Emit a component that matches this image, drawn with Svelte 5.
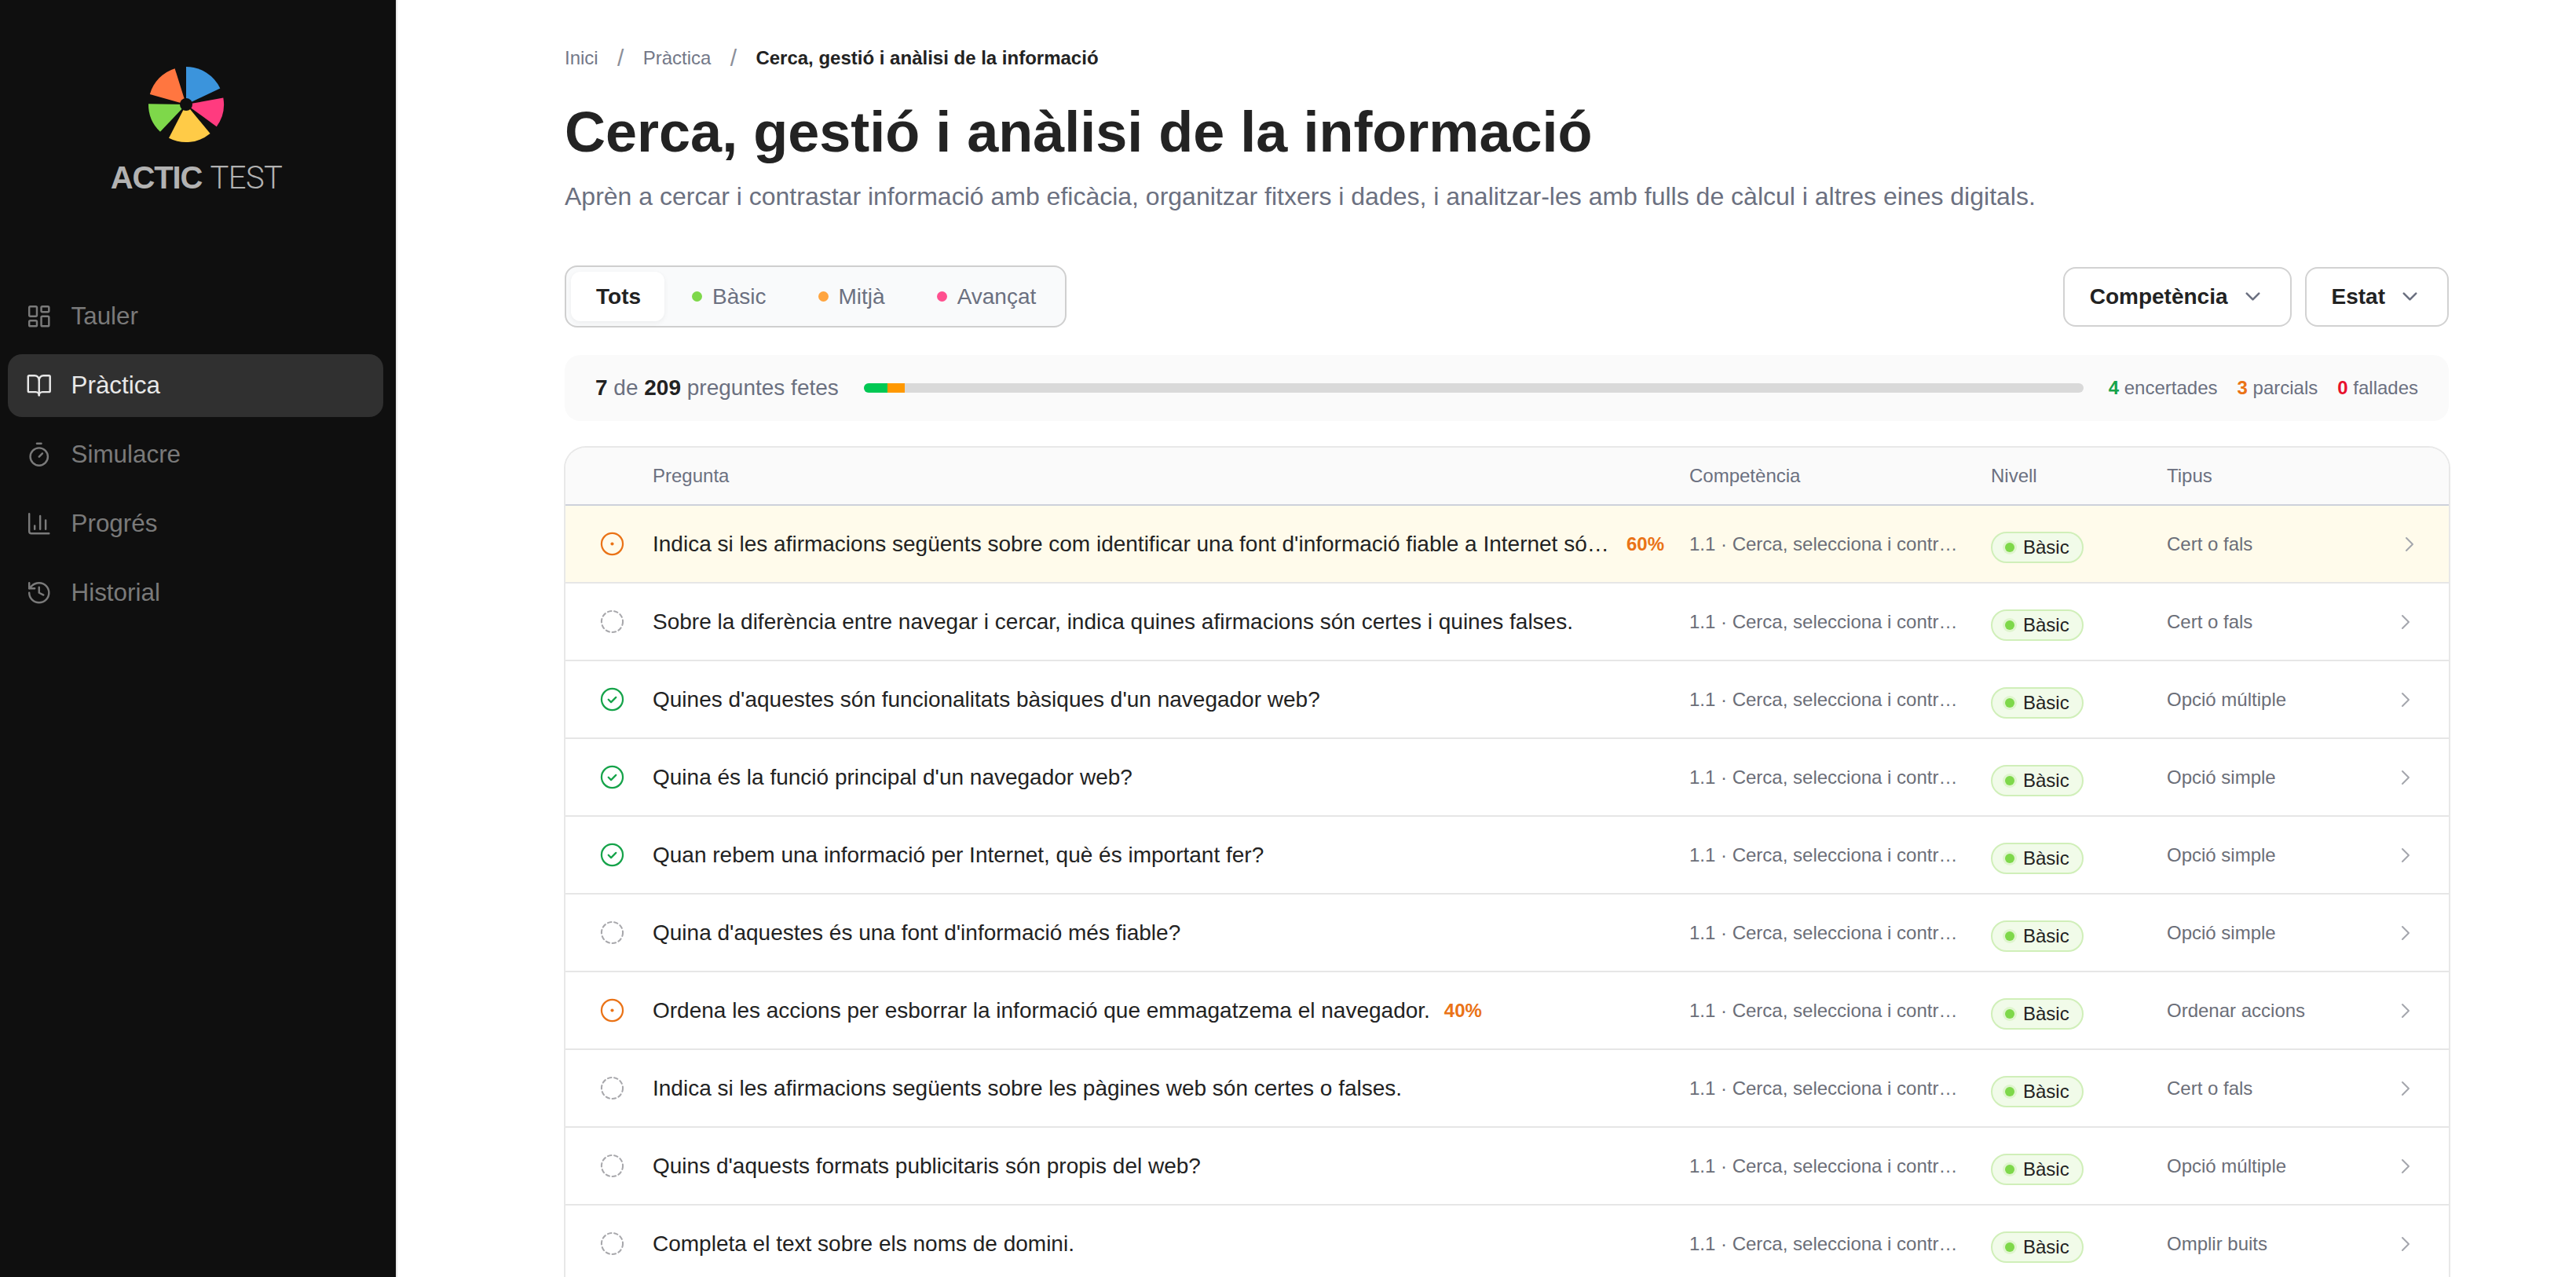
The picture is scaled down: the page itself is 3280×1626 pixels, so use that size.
<script>
  const nav = [
    { label: 'Tauler', icon: 'dash' },
    { label: 'Pràctica', icon: 'book', active: true },
    { label: 'Simulacre', icon: 'timer' },
    { label: 'Progrés', icon: 'chart' },
    { label: 'Historial', icon: 'history' }
  ];
  const comp = '1.1 · Cerca, selecciona i contrasta informació en entorns digitals';
  const rows = [
    { s: 'part', q: "Indica si les afirmacions següents sobre com identificar una font d'informació fiable a Internet són certes o falses.", p: '60%', t: 'Cert o fals', hi: true },
    { s: 'none', q: 'Sobre la diferència entre navegar i cercar, indica quines afirmacions són certes i quines falses.', t: 'Cert o fals' },
    { s: 'ok', q: "Quines d'aquestes són funcionalitats bàsiques d'un navegador web?", t: 'Opció múltiple' },
    { s: 'ok', q: "Quina és la funció principal d'un navegador web?", t: 'Opció simple' },
    { s: 'ok', q: 'Quan rebem una informació per Internet, què és important fer?', t: 'Opció simple' },
    { s: 'none', q: "Quina d'aquestes és una font d'informació més fiable?", t: 'Opció simple' },
    { s: 'part', q: 'Ordena les accions per esborrar la informació que emmagatzema el navegador.', p: '40%', t: 'Ordenar accions' },
    { s: 'none', q: 'Indica si les afirmacions següents sobre les pàgines web són certes o falses.', t: 'Cert o fals' },
    { s: 'none', q: "Quins d'aquests formats publicitaris són propis del web?", t: 'Opció múltiple' },
    { s: 'none', q: 'Completa el text sobre els noms de domini.', t: 'Omplir buits' }
  ];
</script>

<div class="page">
  <aside class="side">
    <div class="brand">
      <svg class="mark" viewBox="0 0 100 100" width="100" height="100">
        <path fill="#3b94dc" d="M50 50 L50 2 A48 48 0 0 1 93.3 29.4 Z" />
        <path fill="#ff3b7f" d="M50 50 L97.3 41.6 A48 48 0 0 1 88.8 78.2 Z" />
        <path fill="#ffcb47" d="M50 50 L80.6 87 A48 48 0 0 1 28 92.7 Z" />
        <path fill="#7ed84a" d="M50 50 L17 84.8 A48 48 0 0 1 2 49.2 Z" />
        <path fill="#ff7640" d="M50 50 L3.8 37.1 A48 48 0 0 1 35.6 4.2 Z" />
        <circle cx="50" cy="50" r="8" fill="#0f0f0f" />
      </svg>
      <div class="wordmark"><b>ACTIC</b> <span>TEST</span></div>
    </div>
    <nav class="nav">
      {#each nav as n}
        <div class="item" class:active={n.active}>
          <svg class="ico" viewBox="0 0 24 24" fill="none" stroke="currentColor" stroke-width="1.75" stroke-linecap="round" stroke-linejoin="round">
            {#if n.icon === 'dash'}
              <rect x="3" y="3" width="7" height="9" rx="1" /><rect x="14" y="3" width="7" height="5" rx="1" /><rect x="14" y="12" width="7" height="9" rx="1" /><rect x="3" y="16" width="7" height="5" rx="1" />
            {:else if n.icon === 'book'}
              <path d="M12 7v14" /><path d="M3 18a1 1 0 0 1-1-1V4a1 1 0 0 1 1-1h5a4 4 0 0 1 4 4 4 4 0 0 1 4-4h5a1 1 0 0 1 1 1v13a1 1 0 0 1-1 1h-6a3 3 0 0 0-3 3 3 3 0 0 0-3-3z" />
            {:else if n.icon === 'timer'}
              <line x1="10" x2="14" y1="2" y2="2" /><line x1="12" x2="15" y1="14" y2="11" /><circle cx="12" cy="14" r="8" />
            {:else if n.icon === 'chart'}
              <path d="M3 3v16a2 2 0 0 0 2 2h16" /><path d="M18 17V9" /><path d="M13 17V5" /><path d="M8 17v-3" />
            {:else}
              <path d="M3 12a9 9 0 1 0 9-9 9.75 9.75 0 0 0-6.74 2.74L3 8" /><path d="M3 3v5h5" /><path d="M12 7v5l4 2" />
            {/if}
          </svg>
          <span>{n.label}</span>
        </div>
      {/each}
    </nav>
  </aside>

  <main class="main">
    <div class="crumbs">
      <span>Inici</span><i>/</i><span>Pràctica</span><i>/</i><b>Cerca, gestió i anàlisi de la informació</b>
    </div>
    <h1>Cerca, gestió i anàlisi de la informació</h1>
    <p class="lead">Aprèn a cercar i contrastar informació amb eficàcia, organitzar fitxers i dades, i analitzar-les amb fulls de càlcul i altres eines digitals.</p>

    <div class="filters">
      <div class="tabs">
        <div class="tab on">Tots</div>
        <div class="tab"><em class="d g"></em>Bàsic</div>
        <div class="tab"><em class="d o"></em>Mitjà</div>
        <div class="tab"><em class="d p"></em>Avançat</div>
      </div>
      <div class="drops">
        <div class="drop">Competència
          <svg viewBox="0 0 24 24" fill="none" stroke="#6b7080" stroke-width="2" stroke-linecap="round" stroke-linejoin="round"><path d="m6 9 6 6 6-6" /></svg>
        </div>
        <div class="drop">Estat
          <svg viewBox="0 0 24 24" fill="none" stroke="#6b7080" stroke-width="2" stroke-linecap="round" stroke-linejoin="round"><path d="m6 9 6 6 6-6" /></svg>
        </div>
      </div>
    </div>

    <div class="strip">
      <div class="count"><b>7</b> de <b>209</b> preguntes fetes</div>
      <div class="bar"><div class="fill-g"></div><div class="fill-o"></div></div>
      <div class="stats">
        <span><b class="cg">4</b> encertades</span>
        <span><b class="co">3</b> parcials</span>
        <span><b class="cr">0</b> fallades</span>
      </div>
    </div>

    <div class="table">
      <div class="head">
        <div></div><div>Pregunta</div><div>Competència</div><div>Nivell</div><div>Tipus</div><div></div>
      </div>
      {#each rows as r}
        <div class="row" class:hi={r.hi}>
          <div class="st">
            {#if r.s === 'part'}
              <svg viewBox="0 0 24 24" fill="none" stroke="#ea7317" stroke-width="1.75"><circle cx="12" cy="12" r="10.5" /><circle cx="12" cy="12" r="1.6" fill="#ea7317" stroke="none" /></svg>
            {:else if r.s === 'ok'}
              <svg viewBox="0 0 24 24" fill="none" stroke="#16a34a" stroke-width="1.75" stroke-linecap="round" stroke-linejoin="round"><circle cx="12" cy="12" r="10.5" /><path d="m8.3 12.2 2.6 2.6 4.8-4.8" /></svg>
            {:else}
              <svg viewBox="0 0 24 24" fill="none" stroke="#a8a8ac" stroke-width="1.6" stroke-linecap="round" stroke-dasharray="3.5 2.9"><circle cx="12" cy="12" r="10.5" /></svg>
            {/if}
          </div>
          <div class="q"><span class="qt">{r.q}</span>{#if r.p}<span class="pct">{r.p}</span>{/if}</div>
          <div class="comp"><span>{comp}</span></div>
          <div class="lvl"><span class="badge"><em></em>Bàsic</span></div>
          <div class="type">{r.t}</div>
          <div class="chev"><svg viewBox="0 0 12 20" fill="none" stroke="#a4a6ad" stroke-width="2" stroke-linecap="round" stroke-linejoin="round"><path d="m2 2 8 8-8 8" /></svg></div>
        </div>
      {/each}
    </div>
  </main>
</div>

<style>
  :global(body) { margin: 0; background: #fff; }
  .page { display: flex; width: 3280px; height: 1626px; overflow: hidden; font-family: "Liberation Sans", Arial, sans-serif; color: #222; }

  .side { box-sizing: border-box; width: 506px; flex: none; background: #0f0f0f; border-right: 2px solid #e8e8e8; }
  .brand { display: flex; flex-direction: column; align-items: center; padding-top: 83px; padding-right: 4px; }
  .mark { display: block; margin-right: 26px; }
  .wordmark { margin-top: 20px; font-size: 40px; line-height: 46px; color: #b2b2b2; letter-spacing: -1.1px; white-space: nowrap; }
  .wordmark b { font-weight: 700; }
  .wordmark span { font-family: Roboto, sans-serif; font-weight: 300; letter-spacing: -0.6px; }

  .nav { margin-top: 113px; padding: 0 16px 0 10px; display: flex; flex-direction: column; gap: 8px; }
  .item { display: flex; align-items: center; gap: 24px; height: 80px; padding-left: 23px; border-radius: 18px; color: #7a7a7a; font-size: 31.4px; }
  .item.active { background: #303030; color: #e8e8e8; }
  .ico { width: 33.5px; height: 33.5px; flex: none; }

  .main { flex: 1; min-width: 0; box-sizing: border-box; padding: 58px 160px 0 212px; }
  .crumbs { display: flex; align-items: center; height: 32px; padding-left: 1px; font-size: 24px; color: #737888; }
  .crumbs i { font-style: normal; font-size: 30px; font-weight: 400; width: 57px; text-align: center; color: #8c8f99; }
  .crumbs b { color: #222; }
  h1 { margin: 34px 0 0; padding-left: 1px; font-size: 72px; line-height: 88px; font-weight: 700; color: #232323; }
  .lead { margin: 16px 0 0; padding-left: 1px; font-size: 32px; line-height: 44px; color: #6b7080; }

  .filters { display: flex; justify-content: space-between; align-items: center; margin: 66px 2px 0 1px; }
  .tabs { display: flex; gap: 4px; padding: 6px; box-sizing: border-box; height: 79px; background: #f9fafb; border: 2px solid #cfcfcf; border-radius: 16px; }
  .tab { display: flex; align-items: center; gap: 13px; padding: 0 31px; border-radius: 12px; font-size: 28px; color: #6b7080; }
  .tab.on { padding: 0 30px 0 32px; background: #fff; color: #222; font-weight: 700; box-shadow: 0 2px 6px rgba(0, 0, 0, 0.06); }
  .d { display: block; width: 13px; height: 13px; border-radius: 50%; }
  .g { background: #7ed84a; }
  .o { background: #ffa53f; }
  .p { background: #ff4f8f; }
  .drops { display: flex; gap: 17px; }
  .drop { display: flex; align-items: center; gap: 16px; box-sizing: border-box; height: 76px; padding: 0 32px; background: #fff; border: 2px solid #d2d2d2; border-radius: 16px; font-size: 28px; font-weight: 700; }
  .drop svg { width: 31px; height: 31px; }

  .strip { display: flex; align-items: center; box-sizing: border-box; height: 84px; margin: 35px 2px 0 1px; padding: 0 39px; background: #fafafa; border-radius: 20px; }
  .count { font-size: 28px; color: #6b7080; white-space: nowrap; }
  .count b, .stats b { font-weight: 700; }
  .count b { color: #222; }
  .bar { flex: 1; display: flex; height: 12px; margin: 0 32px; background: #d9d9d9; border-radius: 6px; overflow: hidden; }
  .fill-g { width: 30px; background: #00c853; }
  .fill-o { width: 22px; background: #ff9800; }
  .stats { display: flex; gap: 25px; font-size: 24px; color: #6b7080; white-space: nowrap; }
  .cg { color: #16a34a; }
  .co { color: #ea7317; }
  .cr { color: #e8112d; }

  .table { margin-top: 32px; border: 2px solid #e8e8e8; border-bottom: 0; border-radius: 28px 28px 0 0; overflow: hidden; }
  .head, .row { display: grid; grid-template-columns: 111px 1320px 384px 224px 281px 1fr; align-items: center; }
  .head { height: 72px; background: #fafafa; border-bottom: 2px solid #cdd1da; font-size: 24px; color: #6b7080; }
  .row { height: 97px; border-bottom: 2px solid #e6e6e6; background: #fff; }
  .row.hi { background: #fffbeb; }
  .st { display: flex; justify-content: center; padding-left: 8px; }
  .st svg { width: 31px; height: 31px; }
  .q { display: flex; align-items: center; gap: 18px; min-width: 0; padding-top: 1px; padding-right: 32px; font-size: 28px; color: #222; }
  .qt { min-width: 0; overflow: hidden; text-overflow: ellipsis; white-space: nowrap; }
  .pct { flex: none; font-size: 24px; font-weight: 700; color: #ea7317; }
  .comp { min-width: 0; padding-right: 36px; font-size: 24px; color: #6b6e78; }
  .comp span { display: block; overflow: hidden; text-overflow: ellipsis; white-space: nowrap; }
  .lvl { padding-top: 9px; }
  .badge { display: inline-flex; align-items: center; gap: 11px; box-sizing: border-box; height: 40px; padding: 0 16px; background: #f1fbe9; border: 2px solid #d0efb9; border-radius: 20px; font-size: 24px; color: #222; }
  .badge em { display: block; width: 12px; height: 12px; border-radius: 50%; background: #7ed84a; box-shadow: 0 0 0 3px #dff5ce; }
  .type { font-size: 24px; color: #6b6e78; }
  .chev svg { display: block; width: 12px; height: 20px; margin-left: 17px; }
  .row.hi .chev svg { margin-left: 22px; }
</style>
